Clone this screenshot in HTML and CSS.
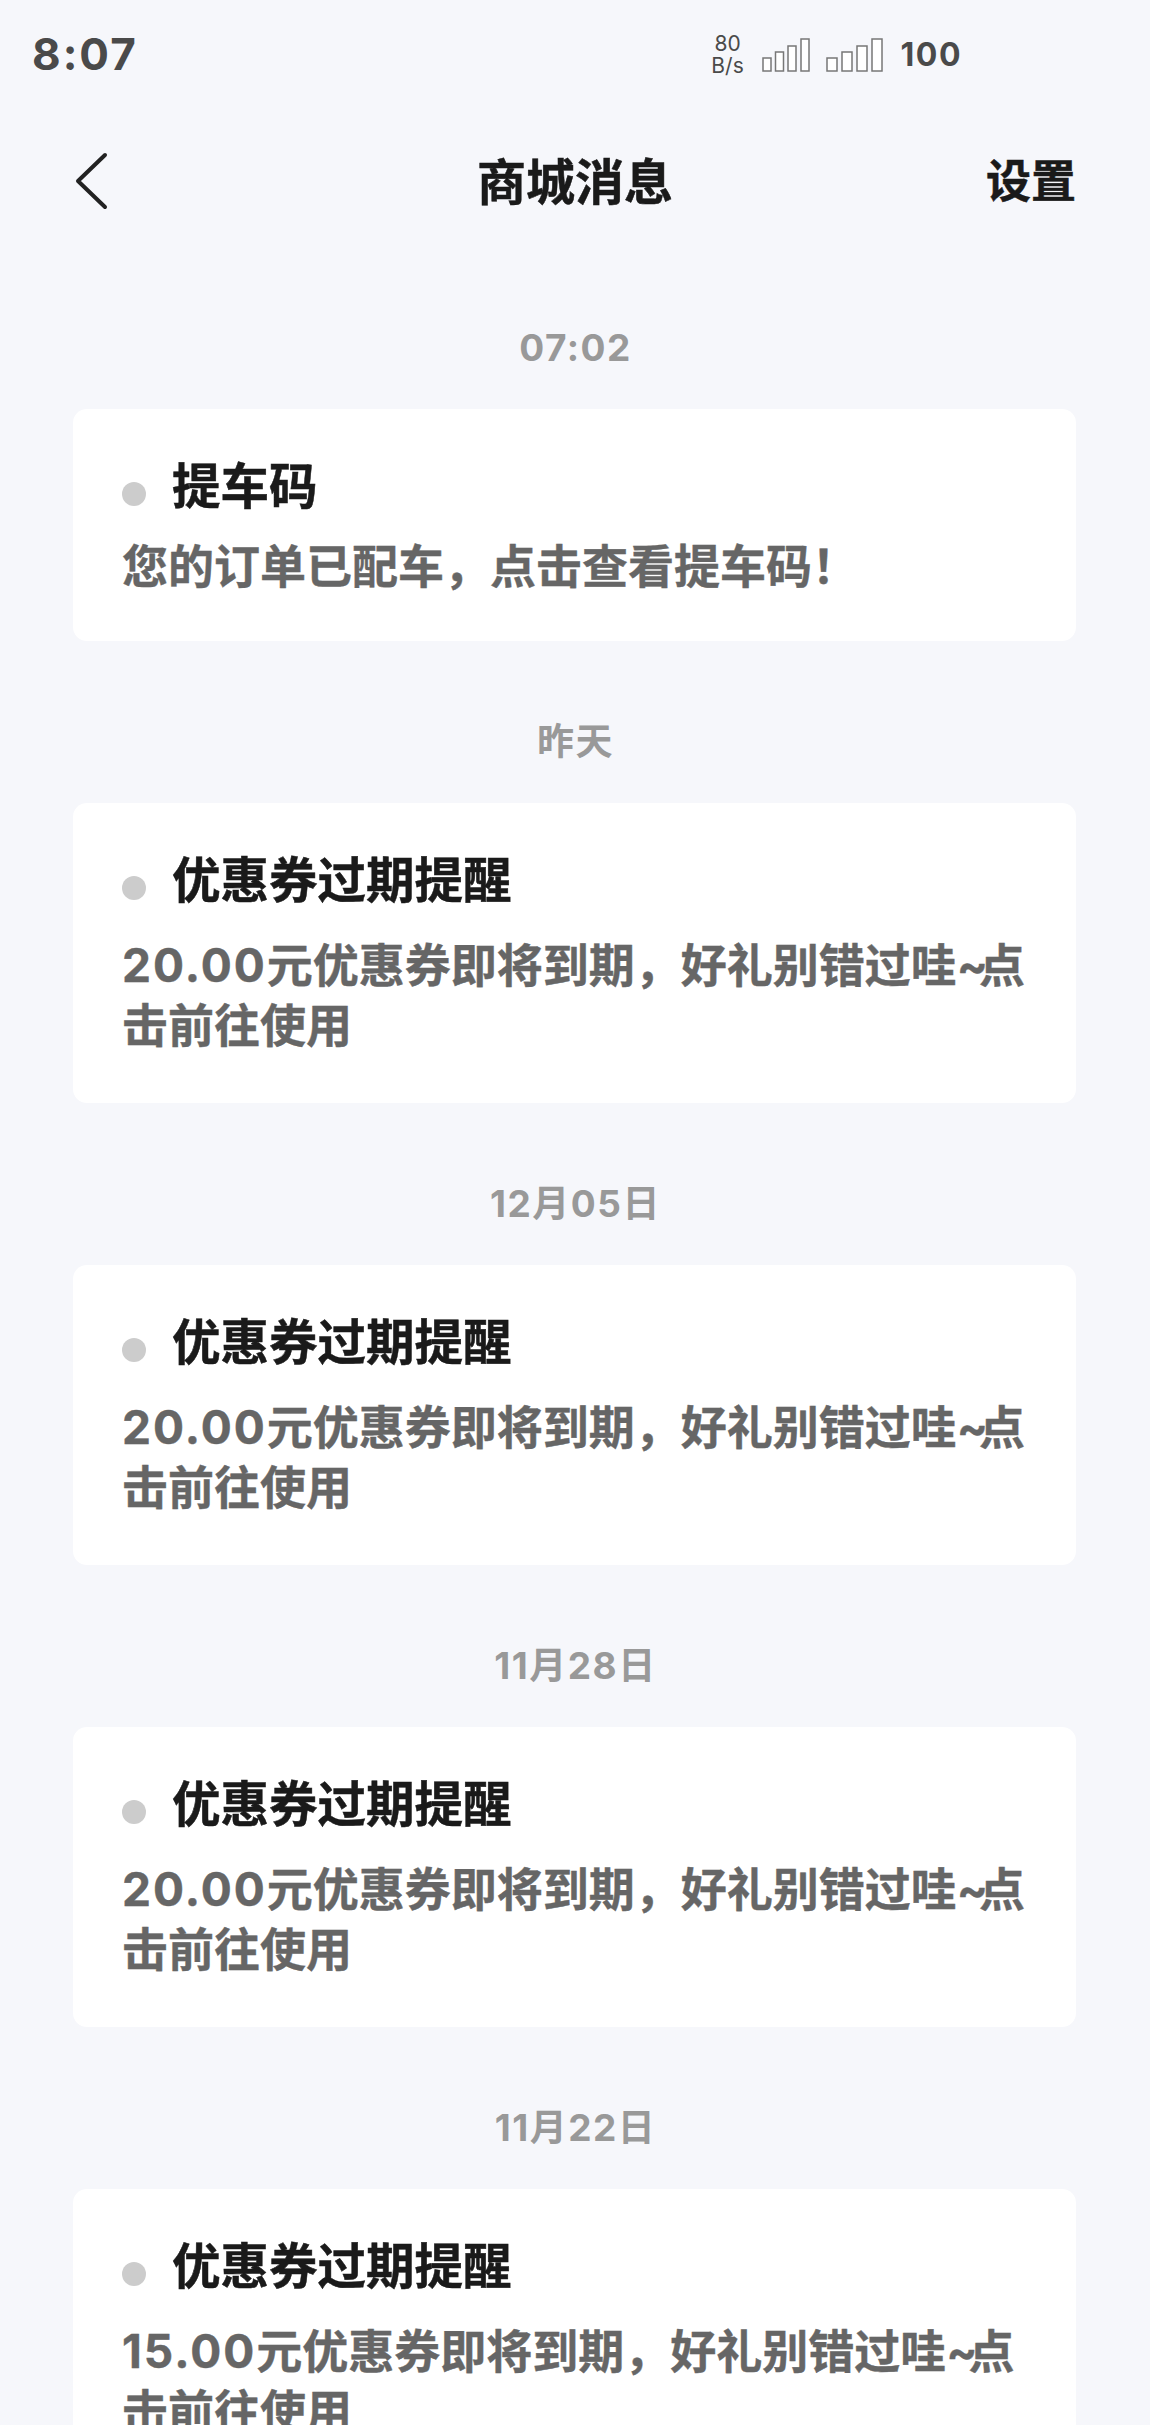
FILE: index.html
```html
<!DOCTYPE html>
<html lang="zh-CN">
<head>
    <meta charset="UTF-8">
    <meta name="viewport" content="width=device-width, initial-scale=1.0">
    <title>商城消息</title>
    <link rel="stylesheet" href="styles.css">
</head>
<body>

<div class="status-bar">
    <span class="clock">8:07</span>
    <div class="status-right">
        <div class="speed"><span>80</span><span>B/s</span></div>
        <svg class="signal-a" width="48" height="34" viewBox="0 0 48 34" fill="#fff" stroke="#777" stroke-width="1.5">
            <rect x="1" y="20" width="8" height="13"/>
            <rect x="13.5" y="14" width="8" height="19"/>
            <rect x="26" y="8" width="8" height="25"/>
            <rect x="39" y="1" width="8" height="32"/>
        </svg>
        <svg class="signal-b" width="58" height="34" viewBox="0 0 58 34" fill="#fff" stroke="#777" stroke-width="1.5">
            <rect x="1" y="20" width="10" height="13"/>
            <rect x="16" y="14" width="10" height="19"/>
            <rect x="31" y="8" width="10" height="25"/>
            <rect x="46" y="1" width="10" height="32"/>
        </svg>
        <span class="battery">100</span>
    </div>
</div>

<div class="nav">
    <svg class="back" width="34" height="58" viewBox="0 0 34 58" fill="none" stroke="#222" stroke-width="4" stroke-linecap="round" stroke-linejoin="round">
        <path d="M31 3 L4 29 L31 55"/>
    </svg>
    <h1 class="nav-title">商城消息</h1>
    <span class="nav-action">设置</span>
</div>

<div class="list">
    <div class="group">
        <div class="date">07:02</div>
        <div class="card card-short">
            <div class="card-title"><i class="dot"></i>提车码</div>
            <p class="card-text">您的订单已配车，点击查看提车码！</p>
        </div>
    </div>

    <div class="group">
        <div class="date">昨天</div>
        <div class="card">
            <div class="card-title"><i class="dot"></i>优惠券过期提醒</div>
            <p class="card-text"><span class="num">20.00</span>元优惠券即将到期，好礼别错过哇<span class="tilde">~</span>点击前往使用</p>
        </div>
    </div>

    <div class="group">
        <div class="date">12月05日</div>
        <div class="card">
            <div class="card-title"><i class="dot"></i>优惠券过期提醒</div>
            <p class="card-text"><span class="num">20.00</span>元优惠券即将到期，好礼别错过哇<span class="tilde">~</span>点击前往使用</p>
        </div>
    </div>

    <div class="group">
        <div class="date">11月28日</div>
        <div class="card">
            <div class="card-title"><i class="dot"></i>优惠券过期提醒</div>
            <p class="card-text"><span class="num">20.00</span>元优惠券即将到期，好礼别错过哇<span class="tilde">~</span>点击前往使用</p>
        </div>
    </div>

    <div class="group">
        <div class="date">11月22日</div>
        <div class="card">
            <div class="card-title"><i class="dot"></i>优惠券过期提醒</div>
            <p class="card-text"><span class="num">15.00</span>元优惠券即将到期，好礼别错过哇<span class="tilde">~</span>点击前往使用</p>
        </div>
    </div>
</div>

</body>
</html>
```

FILE: styles.css
```css
html, body { margin: 0; height: 100%; overflow: hidden; }
body { background: #f6f7fb; font-family: Inter, "Noto Sans CJK SC", sans-serif; font-weight: 700; }

.status-bar { display: flex; align-items: center; justify-content: space-between; height: 108px; padding: 0 188px 0 32px; color: #4a4a4a; }
.clock { font-size: 44px; letter-spacing: 2px; }
.status-right { display: flex; align-items: center; margin-top: 2px; }
.speed { display: flex; flex-direction: column; align-items: center; width: 34px; font-size: 21px; line-height: 22px; font-weight: 400; margin-right: 17px; }
.signal-a { margin-right: 16px; }
.signal-b { margin-right: 17px; }
.battery { font-size: 32px; letter-spacing: 1.5px; margin-bottom: 2px; }

.nav { display: grid; grid-template-columns: 1fr auto 1fr; align-items: center; height: 146px; padding: 0 74px; color: #1a1a1a; }
.back { display: block; }
.nav-title { margin: 0 0 5px; font-size: 49px; font-weight: 700; -webkit-text-stroke: 0.5px #1a1a1a; }
.nav-action { justify-self: end; margin-bottom: 5px; font-size: 45px; -webkit-text-stroke: 0.5px #1a1a1a; }

.list { padding: 58px 74px 0 73px; }
.group { margin-bottom: 65px; }
.date { height: 72px; line-height: 72px; margin-bottom: 25px; padding-left: 2px; text-align: center; font-size: 37px; letter-spacing: 1.5px; color: #999; }

.card { background: #fff; border-radius: 14px; padding: 44px 40px 48px 49px; }
.card-title { display: flex; align-items: center; height: 60px; font-size: 48.5px; color: #1a1a1a; -webkit-text-stroke: 0.5px #1a1a1a; }
.dot { width: 24px; height: 24px; margin: 22px 26px 0 0; border-radius: 50%; background: #ccc; }
.card-text { margin: 28px 0 0; font-size: 46px; line-height: 60px; color: #666; -webkit-text-stroke: 0.4px #666; }
.num { letter-spacing: 2px; }
.tilde { letter-spacing: -9px; }

.card-short { padding: 44px 40px 45px 49px; }
.card-short .card-text { margin-top: 23px; }
```
